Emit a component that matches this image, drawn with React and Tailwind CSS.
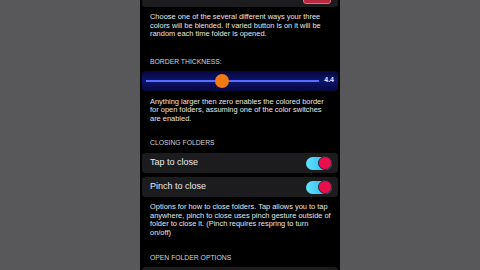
import React from "react";

const Toggle = () => (
  <div className="relative w-[26px] h-[13px] rounded-full bg-gradient-to-r from-[#5fe4ff] to-[#22a8e6]">
    <div className="absolute right-0 top-[-0.5px] w-[14px] h-[14px] rounded-full bg-[#e80f4a] border-[1.5px] border-[#2a2a3a]" />
  </div>
);

const Row = ({ label }) => (
  <div className="flex items-center justify-between h-[20px] rounded-[4px] bg-[#1c1c1e] pl-[8px] pr-[6px]">
    <span className="text-[9px] text-[#ececec]">{label}</span>
    <Toggle />
  </div>
);

const Note = ({ children, className = "" }) => (
  <p className={"pl-[8px] pr-[7px] text-[7.45px] leading-[8.5px] text-[#e6e6e6] " + className}>{children}</p>
);

const Header = ({ children, className = "" }) => (
  <div className={"px-[8px] text-[6.8px] leading-[7px] text-[#d4d4d4] uppercase " + className}>{children}</div>
);

export default function App() {
  return (
    <div
      className="w-[480px] h-[270px] overflow-hidden bg-[#58585a] flex justify-center"
      style={{ fontFamily: '"Liberation Sans", Arial, sans-serif' }}
    >
      <div className="w-[200px] h-full bg-black px-[2px] flex flex-col overflow-hidden">
        {/* top card, mostly scrolled off */}
        <div className="mt-[-15px] h-[22px] shrink-0 rounded-[4px] bg-[#1c1c1e] flex items-center justify-between pl-[8px] pr-[7px]">
          <span className="text-[8px] text-[#9a9a9a]">#CC6666</span>
          <div className="w-[28px] h-[16px] rounded-[3px] bg-[#b8283e] border border-[#e2707c]" />
        </div>

        <Note className="mt-[6px]">
          Choose one of the several different ways your three colors will be blended. If varied button is on it will be random each time folder is opened.
        </Note>

        <Header className="mt-[19px]">Border Thickness:</Header>

        <div className="mt-[6px] h-[20px] shrink-0 rounded-[4px] bg-gradient-to-b from-[#06083a] via-[#0d1470] to-[#06083a] flex items-center pl-[4px] pr-[4px]">
          <div className="relative flex-1 h-[2px] bg-[#5a6cff] flex items-center">
            <div className="absolute left-[69px] w-[14px] h-[14px] rounded-full bg-[#f27a12]" />
          </div>
          <span className="ml-[5px] text-[7px] font-bold text-[#e8eaff]">4.4</span>
        </div>

        <Note className="mt-[7px]">
          Anything larger then zero enables the colored border for open folders, assuming one of the color switches are enabled.
        </Note>

        <Header className="mt-[16px]">Closing Folders</Header>

        <div className="mt-[7px] flex flex-col gap-[4px] shrink-0">
          <Row label="Tap to close" />
          <Row label="Pinch to close" />
        </div>

        <Note className="mt-[6px]">
          Options for how to close folders. Tap allows you to tap anywhere, pinch to close uses pinch gesture outside of folder to close it. (Pinch requires respring to turn on/off)
        </Note>

        <Header className="mt-[17px]">Open Folder Options</Header>

        <div className="mt-[6px] h-[20px] shrink-0 rounded-[4px] bg-[#1c1c1e]" />
      </div>
    </div>
  );
}
